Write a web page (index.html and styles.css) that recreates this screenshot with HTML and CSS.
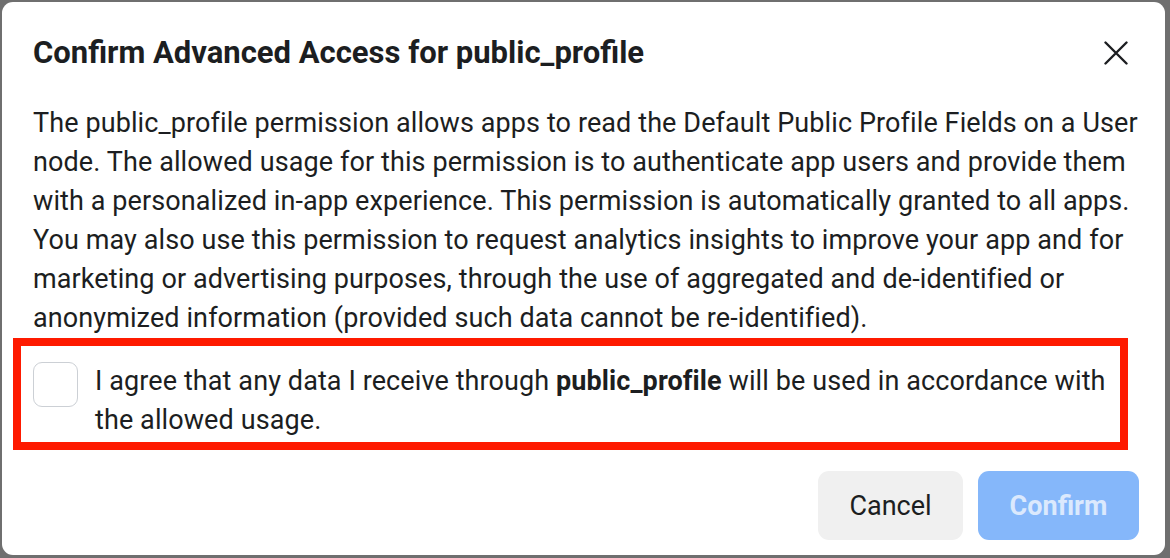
FILE: index.html
```html
<!DOCTYPE html>
<html lang="en">
<head>
<meta charset="utf-8">
<title>Confirm Advanced Access</title>
<link rel="stylesheet" href="styles.css">
</head>
<body>
<div class="dialog">
  <div class="header">
    <h1 class="title">Confirm Advanced Access for public_profile</h1>
    <button class="close" aria-label="Close">
      <svg width="24" height="24" viewBox="0 0 24 24"><path d="M1.5 1.5 L22.5 22.5 M22.5 1.5 L1.5 22.5" stroke="#1c1e21" stroke-width="2.4" stroke-linecap="round" fill="none"/></svg>
    </button>
  </div>
  <p class="desc">The public_profile permission allows apps to read the Default Public Profile Fields on a User node. The allowed usage for this permission is to authenticate app users and provide them with a personalized in-app experience. This permission is automatically granted to all apps. You may also use this permission to request analytics insights to improve your app and for marketing or advertising purposes, through the use of aggregated and de-identified or anonymized information (provided such data cannot be re-identified).</p>
  <label class="agree">
    <span class="checkbox"></span>
    <span class="agree-text">I agree that any data I receive through <b>public_profile</b> will be used in accordance with the allowed usage.</span>
  </label>
  <div class="actions">
    <button class="btn btn-cancel">Cancel</button>
    <button class="btn btn-confirm">Confirm</button>
  </div>
</div>
</body>
</html>
```
FILE: styles.css
```css
html, body {
  margin: 0;
  padding: 0;
}
body {
  background: #6f6f6f;
  padding: 2px 5px 3px 2px;
  font-family: Roboto, "Liberation Sans", sans-serif;
  color: #1c1e21;
  height: 558px;
  box-sizing: border-box;
}
.dialog {
  background: #fff;
  border-radius: 11px;
  height: 553px;
  box-sizing: border-box;
  padding: 31px 26px 15px 31px;
  display: flex;
  flex-direction: column;
}
.header {
  display: flex;
  align-items: center;
  justify-content: space-between;
  height: 39px;
}
.title {
  margin: 0;
  font-size: 31px;
  line-height: 39px;
  font-weight: 700;
  color: #1c1e21;
}
.close {
  width: 46px;
  height: 46px;
  border: 0;
  background: none;
  padding: 0;
  display: flex;
  align-items: center;
  justify-content: center;
  margin-top: 1px;
}
.desc {
  margin: 32px 0 0 0;
  font-size: 27px;
  line-height: 39px;
  letter-spacing: 0.1px;
  color: #1c1e21;
}
.agree {
  display: flex;
  align-items: flex-start;
  gap: 17px;
  margin: 0 11px 0 -20px;
  border: 8px solid #fe1a00;
  padding: 16px 0 2px 12px;
}
.checkbox {
  flex: none;
  width: 45px;
  height: 45px;
  box-sizing: border-box;
  border: 1.5px solid #ccd0d5;
  border-radius: 9px;
  background: #fff;
}
.agree-text {
  font-size: 27px;
  line-height: 39px;
  letter-spacing: 0.1px;
}
.agree-text b {
  font-weight: 700;
}
.actions {
  margin-top: 21px;
  display: flex;
  justify-content: flex-end;
  gap: 15px;
}
.btn {
  height: 69px;
  border: 0;
  border-radius: 11px;
  font-family: Roboto, "Liberation Sans", sans-serif;
  font-size: 27px;
}
.btn-cancel {
  width: 145px;
  background: #f0f0f0;
  color: #1c1e21;
  font-weight: 400;
}
.btn-confirm {
  width: 161px;
  background: #85b7fa;
  color: #dbe9fd;
  font-weight: 700;
}
```
